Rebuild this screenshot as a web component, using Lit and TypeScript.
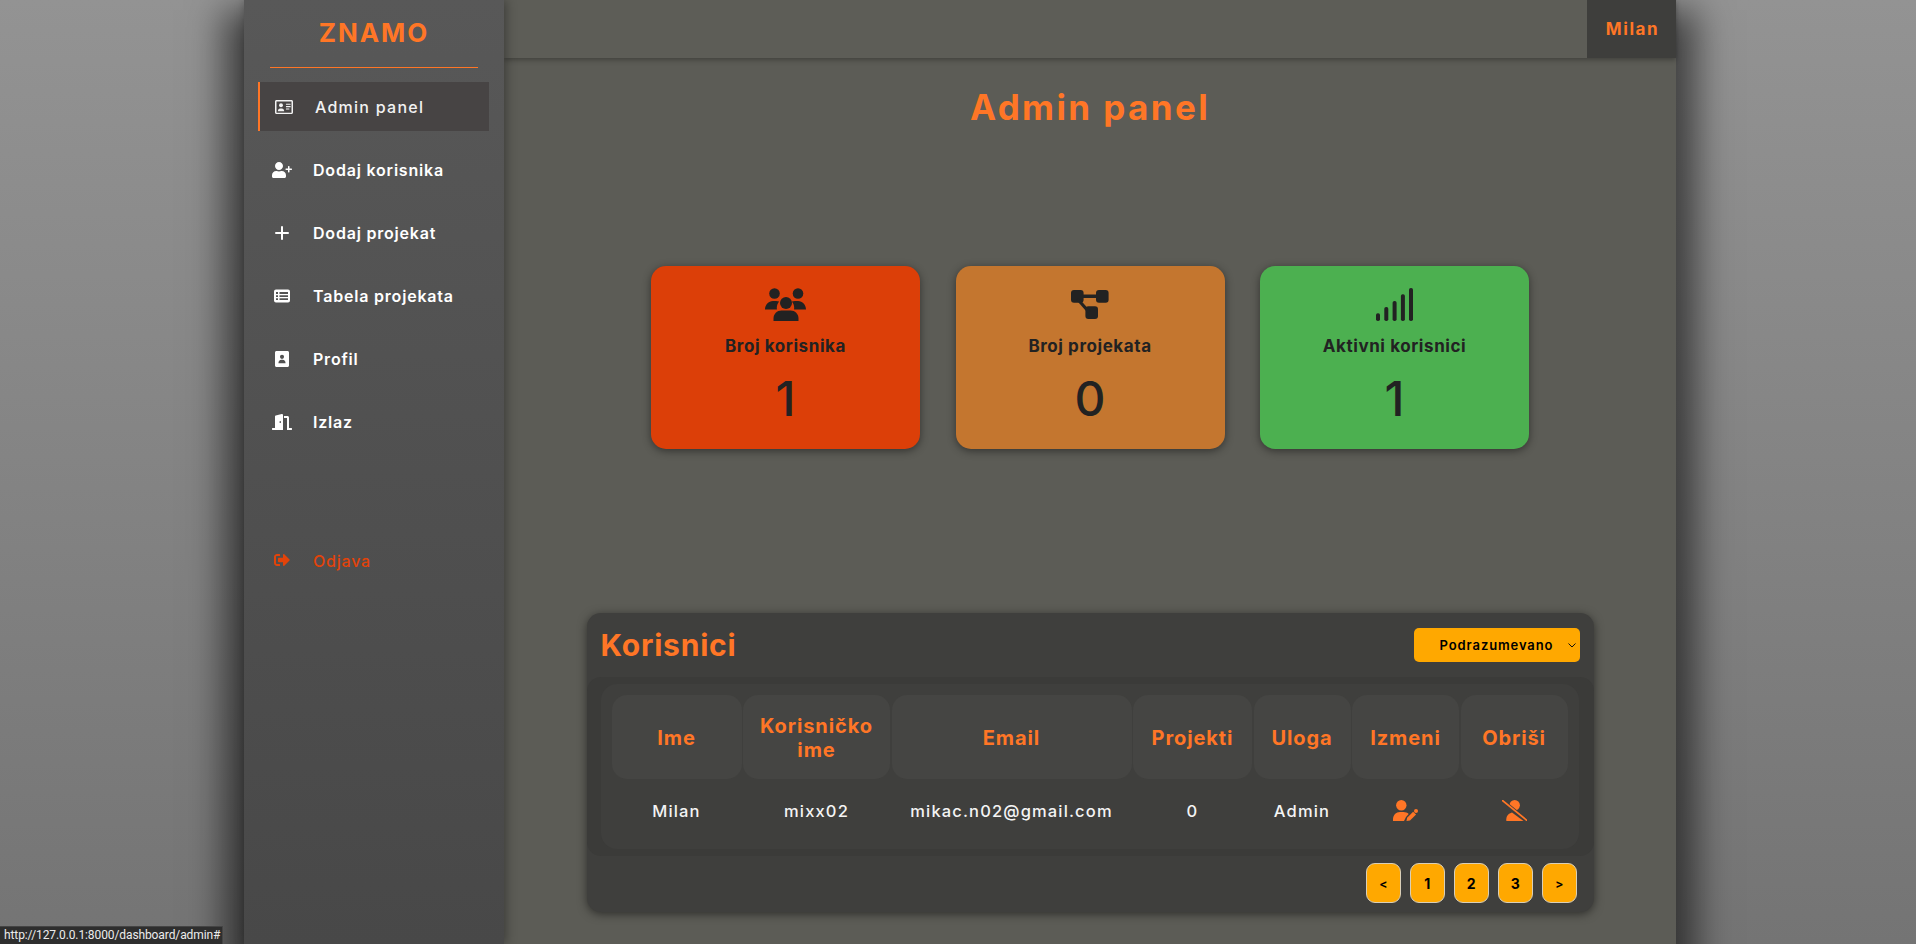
import { LitElement, html, css, svg } from "lit";
import { customElement } from "lit/decorators.js";

const icon = (vb: string, body: unknown, cls = "") =>
  html`<svg class="ic ${cls}" viewBox="${vb}" fill="currentColor" aria-hidden="true">${body}</svg>`;

const idCard = icon("0 0 576 512", svg`
  <path fill-rule="evenodd" d="M48 32h480c26.500 0 48 21.500 48 48v352c0 26.500-21.500 48-48 48H48c-26.500 0-48-21.500-48-48V80c0-26.500 21.500-48 48-48zm0 44v360h480V76H48z"/>
  <circle cx="192" cy="200" r="62"/>
  <path d="M90 390c0-50 35-90 75-90h54c40 0 75 40 75 90z"/>
  <rect x="350" y="150" width="150" height="36" rx="8"/>
  <rect x="350" y="226" width="150" height="36" rx="8"/>
  <rect x="350" y="302" width="110" height="36" rx="8"/>`);
const userPlus = icon("0 0 640 512", svg`
  <path d="M224 256c70.700 0 128-57.300 128-128S294.700 0 224 0 96 57.300 96 128s57.300 128 128 128zm89.600 32h-16.700c-22.200 10.200-46.900 16-72.900 16s-50.600-5.800-72.900-16h-16.700C60.200 288 0 348.200 0 422.400V464c0 26.500 21.500 48 48 48h352c26.500 0 48-21.500 48-48v-41.600c0-74.200-60.200-134.400-134.400-134.400z"/>
  <path d="M624 208h-64v-64c0-8.800-7.200-16-16-16h-16c-8.800 0-16 7.200-16 16v64h-64c-8.800 0-16 7.200-16 16v16c0 8.800 7.200 16 16 16h64v64c0 8.800 7.200 16 16 16h16c8.800 0 16-7.200 16-16v-64h64c8.800 0 16-7.200 16-16v-16c0-8.800-7.200-16-16-16z"/>`);
const plus = icon("0 0 14 14", svg`<rect x="6" y="0" width="2" height="14" rx="1"/><rect x="0" y="6" width="14" height="2" rx="1"/>`, "sq14");
const thList = icon("0 0 16 16", svg`<path fill-rule="evenodd" d="M2 1.500h12a2 2 0 0 1 2 2v9a2 2 0 0 1-2 2H2a2 2 0 0 1-2-2v-9a2 2 0 0 1 2-2zM2 4v2h2V4H2zm3.500 0v2h8.500V4H5.500zM2 7.200v1.800h2V7.200H2zm3.500 0v1.800h8.500V7.200H5.500zM2 10.200V12h2v-1.800H2zm3.500 0V12h8.500v-1.800H5.500z"/>`);
const contact = icon("0 0 448 512", svg`
  <path fill-rule="evenodd" d="M48 0h352c26.500 0 48 21.500 48 48v416c0 26.500-21.500 48-48 48H48c-26.500 0-48-21.500-48-48V48C0 21.500 21.500 0 48 0zm176 120a66 66 0 1 0 0 132 66 66 0 0 0 0-132zM110 390h228c0-60-40-110-90-110h-48c-50 0-90 50-90 110z"/>`);
const door = icon("0 0 640 512", svg`<path d="M624 448h-80V113.450C544 86.190 522.470 64 496 64H384v64h96v384h144c8.840 0 16-7.160 16-16v-32c0-8.840-7.160-16-16-16zM312.240 1.010l-192 49.740C105.990 54.440 96 67.700 96 82.920V448H16c-8.840 0-16 7.160-16 16v32c0 8.840 7.160 16 16 16h336V33.180c0-21.580-19.560-37.410-39.760-32.170zM264 288c-13.250 0-24-14.330-24-32s10.750-32 24-32 24 14.330 24 32-10.750 32-24 32z"/>`);
const signOut = icon("0 0 512 512", svg`<path d="M497 273L329 441c-15 15-41 4.500-41-17v-96H152c-13.300 0-24-10.700-24-24v-96c0-13.300 10.700-24 24-24h136V88c0-21.400 25.900-32 41-17l168 168c9.300 9.400 9.300 24.600 0 34zM192 436v-40c0-6.600-5.400-12-12-12H96c-17.700 0-32-14.300-32-32V160c0-17.700 14.300-32 32-32h84c6.600 0 12-5.400 12-12V76c0-6.600-5.400-12-12-12H96c-53 0-96 43-96 96v192c0 53 43 96 96 96h84c6.600 0 12-5.400 12-12z"/>`);

const users = html`<svg class="big users" viewBox="0 0 41 33" fill="currentColor" aria-hidden="true">
  <circle cx="9.500" cy="5.500" r="5.300"/><circle cx="33" cy="5.500" r="5.300"/><circle cx="21" cy="15" r="6"/>
  <path d="M8.500 33v-2.500c0-4.500 3.500-8 8-8h9c4.500 0 8 3.500 8 8V33z"/>
  <path d="M0 21.500c0-4.800 3.500-8.500 8-8.500h3c1.200 0 2.200.2 3.100.6-1.700 2-2.600 4.800-2.200 7.900zM41 21.500c0-4.800-3.500-8.500-8-8.500h-3c-1.200 0-2.200.2-3.100.6 1.700 2 2.600 4.800 2.200 7.900z"/></svg>`;
const diagram = html`<svg class="big diag" viewBox="0 0 37.500 29" fill="currentColor" aria-hidden="true">
  <rect x="0" y="0" width="12.600" height="12.700" rx="3"/>
  <rect x="25" y="0" width="12.600" height="12.700" rx="3"/>
  <rect x="14.400" y="16.300" width="12.600" height="12.700" rx="3"/>
  <rect x="10" y="4.500" width="18" height="3.500"/>
  <path d="M6.500 9L18 22" stroke="currentColor" stroke-width="3.200"/></svg>`;
const signal = html`<svg class="big sig" viewBox="0 0 37 33" fill="currentColor" aria-hidden="true">
  <rect x="0" y="25.300" width="4" height="7.700" rx="1.800"/><rect x="8.300" y="19" width="4" height="14" rx="1.800"/><rect x="16.600" y="13" width="4" height="20" rx="1.800"/><rect x="24.900" y="6.300" width="4" height="26.700" rx="1.800"/><rect x="33" y="0" width="4" height="33" rx="1.800"/></svg>`;

const userPen = html`<svg class="act" viewBox="0 0 25 21" fill="currentColor" aria-hidden="true">
  <circle cx="8.300" cy="5.200" r="5.200"/>
  <path d="M0 21v-1.500C0 15 3 12 7 12h3.500c2 0 3.800.7 5.200 1.900L13 17l-2 4z"/>
  <path d="M13.500 21l.6-3.300 6-6 3 2.900-6.100 6z"/><circle cx="23" cy="11" r="2"/></svg>`;
const userSlash = html`<svg class="act" viewBox="0 0 25 21" fill="currentColor" aria-hidden="true">
  <circle cx="12.700" cy="5.200" r="5.200"/>
  <path d="M.5.500l24.500 20" stroke="#3f3f3d" stroke-width="3.200"/>
  <path d="M4.300 21v-1.800C4.300 15.800 6.700 13.200 10 12.400L21.500 21z"/>
  <path d="M.5.500l24.500 20" stroke="currentColor" stroke-width="1.700" stroke-linecap="round"/></svg>`;

const chevron = html`<svg class="chev" viewBox="0 0 8 5" fill="none" stroke="#111" stroke-width="1" aria-hidden="true"><path d="M.5.500L4 4l3.500-3.500"/></svg>`;

const NAV = [
  { label: "Admin panel", ic: idCard, cls: "active" },
  { label: "Dodaj korisnika", ic: userPlus, cls: "" },
  { label: "Dodaj projekat", ic: plus, cls: "" },
  { label: "Tabela projekata", ic: thList, cls: "" },
  { label: "Profil", ic: contact, cls: "" },
  { label: "Izlaz", ic: door, cls: "" },
  { label: "Odjava", ic: signOut, cls: "logout" },
];
const CARDS = [
  { label: "Broj korisnika", n: "1", ic: users, cls: "red" },
  { label: "Broj projekata", n: "0", ic: diagram, cls: "amber" },
  { label: "Aktivni korisnici", n: "1", ic: signal, cls: "green" },
];
const HEAD = ["Ime", "Korisničko ime", "Email", "Projekti", "Uloga", "Izmeni", "Obriši"];
const PAGES = [
  { t: "<", cls: "arrow" },
  { t: "1", cls: "" },
  { t: "2", cls: "" },
  { t: "3", cls: "" },
  { t: ">", cls: "arrow" },
];

@customElement("app-root")
export class AppRoot extends LitElement {
  static styles = css`
    :host {
      display: block;
      height: 944px;
      overflow: hidden;
      position: relative;
      font-family: Inter, "Noto Sans", sans-serif;
      background: linear-gradient(180deg, #939393 0%, #747474 100%);
    }
    .shell {
      display: flex;
      width: 1432px;
      height: 944px;
      margin-left: 244px;
      box-shadow: 0 30px 34px 20px rgba(0, 0, 0, 0.56);
      background: #5c5c56;
    }
    .side {
      width: 260px;
      flex: none;
      display: flex;
      flex-direction: column;
      background: linear-gradient(180deg, #585858, #484848);
      box-shadow: 2px 0 10px rgba(0, 0, 0, 0.35);
      position: relative;
      z-index: 2;
    }
    .logo {
      margin: 0 26px;
      height: 68px;
      box-sizing: border-box;
      border-bottom: 1.500px solid #ff7626;
      text-align: center;
      color: #ff7626;
      font-size: 26px;
      font-weight: 700;
      line-height: 65px;
      letter-spacing: 2px;
    }
    nav {
      display: flex;
      flex-direction: column;
      gap: 14px;
      margin: 14px 15px 0 14px;
    }
    .item {
      height: 49px;
      box-sizing: border-box;
      display: flex;
      align-items: center;
      padding-left: 13px;
      gap: 20px;
      color: #fff;
      font-size: 16px;
      font-weight: 600;
      letter-spacing: 0.8px;
    }
    .label {
      padding-top: 1px;
    }
    .item.active {
      background: #474444;
      border-left: 2px solid #ff7626;
      color: #f2f2f2;
      font-weight: 500;
      letter-spacing: 1.250px;
    }
    .item.logout {
      color: #e2430a;
      margin-top: 75.500px;
      font-weight: 500;
    }
    .icbox {
      width: 22px;
      display: flex;
      justify-content: center;
      flex: none;
    }
    .ic {
      height: 16px;
      width: auto;
      display: block;
    }
    .ic.sq14 {
      height: 14px;
    }
    main {
      flex: 1;
      min-width: 0;
      display: flex;
      flex-direction: column;
    }
    .top {
      height: 58px;
      flex: none;
      display: flex;
      justify-content: flex-end;
      box-shadow: 0 2px 5px rgba(0, 0, 0, 0.3);
      background: #5d5d57;
    }
    .user {
      width: 89px;
      box-sizing: border-box;
      background: #3e3e3c;
      color: #ff7626;
      font-size: 17px;
      font-weight: 700;
      letter-spacing: 1.600px;
      display: flex;
      align-items: center;
      justify-content: center;
      padding-left: 2px;
    }
    h1 {
      margin: 26px 0 0;
      height: 46px;
      line-height: 46px;
      text-align: center;
      font-size: 35px;
      font-weight: 700;
      color: #ff7626;
      letter-spacing: 2.400px;
    }
    .cards {
      display: flex;
      justify-content: center;
      gap: 35.500px;
      margin-top: 136px;
    }
    .card {
      width: 269px;
      height: 183px;
      box-sizing: border-box;
      border-radius: 15px;
      box-shadow: 0 2px 8px rgba(0, 0, 0, 0.45);
      color: #222;
      display: flex;
      flex-direction: column;
      align-items: center;
    }
    .red { background: #dc3f08; }
    .amber { background: #c4762f; }
    .green { background: #4cb050; }
    .iconrow {
      height: 33px;
      margin-top: 22px;
      display: flex;
      align-items: center;
    }
    .big { display: block; height: 33px; }
    .big.users { width: 41px; }
    .big.diag { width: 37.500px; height: 29px; }
    .big.sig { width: 37px; }
    .clabel {
      margin-top: 12.500px;
      font-size: 17px;
      font-weight: 700;
      line-height: 24px;
      letter-spacing: 0.580px;
    }
    .cnum {
      margin-top: 12px;
      font-size: 48px;
      font-weight: 500;
      line-height: 58px;
    }
    .panel {
      width: 1007px;
      height: 299px;
      align-self: center;
      margin-top: 164px;
      border-radius: 14px;
      background: #3f3f3d;
      box-shadow: 0 2px 10px rgba(0, 0, 0, 0.5);
      display: flex;
      flex-direction: column;
    }
    .phead {
      height: 64px;
      flex: none;
      display: flex;
      align-items: center;
      justify-content: space-between;
      padding: 0 14px;
    }
    h2 {
      margin: 0;
      font-size: 30px;
      font-weight: 700;
      color: #ff7626;
      letter-spacing: 0.800px;
    }
    .selwrap {
      position: relative;
      width: 166px;
      height: 34px;
      margin-top: -1px;
    }
    select {
      appearance: none;
      display: block;
      width: 100%;
      height: 100%;
      padding: 0;
      border: none;
      border-radius: 5px;
      background-color: #ffa800;
      color: #000;
      font-family: inherit;
      font-size: 13px;
      font-weight: 600;
      letter-spacing: 0.900px;
      text-align: center;
    }
    .chev {
      position: absolute;
      right: 3.500px;
      top: 15px;
      width: 8px;
      height: 5px;
      pointer-events: none;
    }
    .band {
      height: 179px;
      flex: none;
      box-sizing: border-box;
      padding: 7px 15px 7px 14px;
      border-radius: 14px;
      background: #3b3b39;
    }
    .inner {
      height: 165px;
      box-sizing: border-box;
      padding: 11px;
      border-radius: 16px;
      background: #3f3f3d;
    }
    .grid {
      display: grid;
      grid-template-columns: 130px 147px 240px 119px 97px 107px 107px;
      column-gap: 1.500px;
      grid-template-rows: 84px 62px;
      text-align: center;
    }
    .th {
      background: #454543;
      border-radius: 15px;
      color: #ff7626;
      font-size: 20px;
      font-weight: 700;
      line-height: 24px;
      letter-spacing: 0.900px;
      display: flex;
      align-items: center;
      justify-content: center;
      padding: 1px 10px 0;
    }
    .td {
      color: #f4f4f4;
      font-size: 16.500px;
      font-weight: 500;
      display: flex;
      align-items: center;
      justify-content: center;
      letter-spacing: 1.150px;
      padding-top: 1px;
    }
    .td.o { color: #ff7626; padding-top: 0; }
    .act { width: 25px; height: 21px; display: block; }
    .pager {
      display: flex;
      justify-content: flex-end;
      gap: 8.500px;
      padding: 7px 16.500px 0 0;
    }
    .pager button {
      width: 35.500px;
      height: 40px;
      box-sizing: border-box;
      border: 1px solid #d9cfb8;
      border-radius: 9px;
      background: #ffa800;
      color: #000;
      font-family: inherit;
      font-size: 14px;
      font-weight: 700;
      padding: 0;
    }
    .pager button.arrow {
      font-size: 12px;
    }
    .status {
      position: absolute;
      left: 0;
      bottom: 0;
      height: 18px;
      width: 223px;
      box-sizing: border-box;
      padding-left: 4px;
      background: #2e2e2e;
      border-top: 1px solid #444;
      border-right: 1px solid #444;
      color: #ececec;
      font-family: Roboto, sans-serif;
      font-size: 12px;
      letter-spacing: -0.1px;
      line-height: 17px;
      white-space: nowrap;
      z-index: 5;
    }
  `;

  render() {
    return html`
      <div class="shell">
        <aside class="side">
          <div class="logo">ZNAMO</div>
          <nav>
            ${NAV.map((n) => html`<div class="item ${n.cls}"><span class="icbox">${n.ic}</span><span class="label">${n.label}</span></div>`)}
          </nav>
        </aside>
        <main>
          <header class="top"><div class="user">Milan</div></header>
          <h1>Admin panel</h1>
          <section class="cards">
            ${CARDS.map((c) => html`<div class="card ${c.cls}">
              <div class="iconrow">${c.ic}</div>
              <div class="clabel">${c.label}</div>
              <div class="cnum">${c.n}</div>
            </div>`)}
          </section>
          <section class="panel">
            <div class="phead">
              <h2>Korisnici</h2>
              <div class="selwrap"><select><option>Podrazumevano</option></select>${chevron}</div>
            </div>
            <div class="band">
              <div class="inner">
                <div class="grid">
                  ${HEAD.map((h) => html`<div class="th">${h}</div>`)}
                  <div class="td">Milan</div>
                  <div class="td">mixx02</div>
                  <div class="td">mikac.n02@gmail.com</div>
                  <div class="td">0</div>
                  <div class="td">Admin</div>
                  <div class="td o">${userPen}</div>
                  <div class="td o">${userSlash}</div>
                </div>
              </div>
            </div>
            <div class="pager">
              ${PAGES.map((p) => html`<button class="${p.cls}">${p.t}</button>`)}
            </div>
          </section>
        </main>
      </div>
      <div class="status">http://127.0.0.1:8000/dashboard/admin#</div>
    `;
  }
}
